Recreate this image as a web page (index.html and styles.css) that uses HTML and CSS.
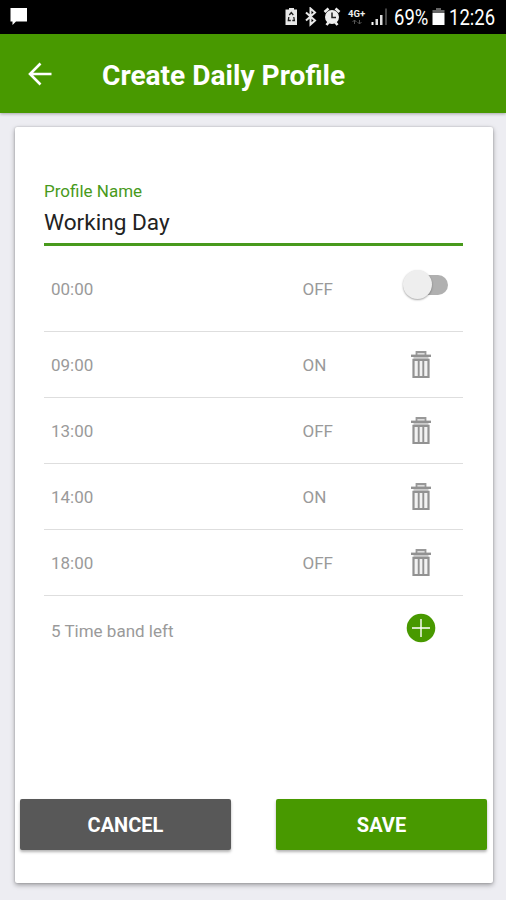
FILE: index.html
```html
<!DOCTYPE html>
<html lang="en">
<head>
<meta charset="utf-8">
<title>Create Daily Profile</title>
<link rel="stylesheet" href="styles.css">
</head>
<body>
<svg class="defs" width="0" height="0" aria-hidden="true">
  <symbol id="trash" viewBox="0 0 22 30">
    <path d="M6.500 5V2h9v3" fill="#ddd" stroke="#999" stroke-width="1.800"/>
    <path d="M1 5.800h20" stroke="#929292" stroke-width="2.400"/>
    <path d="M3.500 7h15v2h-15z" fill="#ccc"/>
    <path d="M3.500 9.800h15v17.200h-15z" fill="#f2f2f2" stroke="#929292" stroke-width="2.200"/>
    <path d="M8.700 10v17M13.300 10v17" stroke="#929292" stroke-width="1.900"/>
  </symbol>
</svg>
<header class="status">
  <svg class="chat" width="18" height="20" viewBox="0 0 18 20"><path d="M.5 1h16.500v13.500H6L2.500 18v-3.500h-2z" fill="#fff"/></svg>
  <div class="indicators">
    <svg width="106" height="20" viewBox="0 0 106 20">
      <path d="M5 1h5v1.500h3V18H1.500V2.500H5z" fill="#e8e8e8"/>
      <path d="M5.300 8 7.300 5.500l2 2.500M4.800 10l-.5 3.500h2.500M9.800 10l.6 3.500H8.300" fill="none" stroke="#222" stroke-width="1.300"/>
      <path d="m22 5.500 9 8-4.500 4V1.500l4.500 4-9 8" fill="none" stroke="#e8e8e8" stroke-width="2"/>
      <circle cx="48" cy="10" r="7" fill="#eee"/>
      <path d="m40.500 5 4-3.500M55.500 5l-4-3.500M42.500 18l2-2.500M53.500 18l-2-2.500" stroke="#eee" stroke-width="2.600"/>
      <path d="M48 5.500V10.500h4" fill="none" stroke="#222" stroke-width="1.500"/>
      <text class="network" x="64" y="9.500">4G+</text>
      <path d="M70.500 17v-4m-2 2 2-2 2 2M75.500 13v4m-2-2 2 2 2-2" fill="none" stroke="#555" stroke-width="1"/>
      <path d="M87.500 15h2v3h-2z" fill="#fff"/><path d="M91.500 12H94v6h-2.500zM96 8h2.500v10H96z" fill="#ddd"/><path d="M101 1.500h2V18h-2z" fill="#444"/>
    </svg>
    <span class="percent">69%</span>
    <svg class="battery" width="13" height="19" viewBox="0 0 13 19"><path d="M4 1h5v2h3.500v3H.5V3H4z" fill="#666"/><path d="M.5 6h12v12H.5z" fill="#fff"/></svg>
    <span class="clock">12:26</span>
  </div>
</header>
<nav class="appbar">
  <svg class="back" width="24" height="24" viewBox="0 0 24 24"><path d="M23.500 12H2M12.500 1.500 2 12l10.500 10.500" fill="none" stroke="#fff" stroke-width="2.600"/></svg>
  <h1>Create Daily Profile</h1>
</nav>
<main class="card">
  <section class="content">
    <div class="label">Profile Name</div>
    <div class="field">Working Day</div>
    <div class="row first"><span class="time">00:00</span><span class="state">OFF</span><span class="action"><span class="switch"><span class="thumb"></span></span></span></div>
    <div class="row"><span class="time">09:00</span><span class="state">ON</span><span class="action"><svg width="22" height="30"><use href="#trash"/></svg></span></div>
    <div class="row"><span class="time">13:00</span><span class="state">OFF</span><span class="action"><svg width="22" height="30"><use href="#trash"/></svg></span></div>
    <div class="row"><span class="time">14:00</span><span class="state">ON</span><span class="action"><svg width="22" height="30"><use href="#trash"/></svg></span></div>
    <div class="row"><span class="time">18:00</span><span class="state">OFF</span><span class="action"><svg width="22" height="30"><use href="#trash"/></svg></span></div>
    <div class="row last"><span class="left">5 Time band left</span><span class="action"><svg class="add" width="30" height="30" viewBox="0 0 30 30"><circle cx="15" cy="15" r="14.300" fill="#489900"/><path d="M6 15h18M15 6v18" stroke="#fff" stroke-width="1.400"/></svg></span></div>
  </section>
  <footer class="buttons">
    <button class="cancel">CANCEL</button>
    <button class="save">SAVE</button>
  </footer>
</main>
</body>
</html>
```

FILE: styles.css
```css
* { box-sizing: border-box; }
body {
  margin: 0;
  height: 900px;
  display: flex;
  flex-direction: column;
  overflow: hidden;
  background: #ededf2;
  font-family: Roboto, "Liberation Sans", sans-serif;
}
.defs { display: none; }
.status {
  height: 34px;
  flex: none;
  display: flex;
  justify-content: space-between;
  padding: 0 10px;
  background: #000;
  color: #fff;
}
.chat { margin-top: 7px; }
.indicators { display: flex; width: 212px; padding-top: 7px; }
.indicators svg { flex: none; }
.network { font-size: 9.500px; font-weight: 700; fill: #eee; }
.percent, .clock {
  font-size: 22px;
  line-height: 22px;
  transform-origin: left center;
  transform: scaleX(.84);
  white-space: nowrap;
}
.percent { width: 38px; margin-left: 4px; }
.clock { width: 46px; margin-left: 4px; }
.appbar {
  height: 79px;
  flex: none;
  display: flex;
  align-items: center;
  padding: 2px 0 0 28px;
  background: #489900;
  box-shadow: 0 1px 3px rgba(0, 0, 0, .3);
}
.back { margin-top: -1px; }
.appbar h1 {
  margin: 3px 0 0 50px;
  font-size: 28.100px;
  line-height: 32px;
  font-weight: 700;
  color: #fff;
  white-space: nowrap;
}
.card {
  height: 756px;
  flex: none;
  display: flex;
  flex-direction: column;
  justify-content: space-between;
  margin: 14px 13px 0 15px;
  background: #fff;
  border-radius: 2px;
  box-shadow: 0 2px 5px rgba(0, 0, 0, .35), 0 0 2px rgba(0, 0, 0, .2);
}
.content { padding: 53px 30px 0 29px; }
.label { font-size: 17px; line-height: 22px; color: #489a1c; }
.field {
  height: 44px;
  padding-top: 7px;
  border-bottom: 3px solid #489a1c;
  font-size: 22.600px;
  line-height: 28px;
  color: #222;
}
.row {
  height: 66px;
  display: flex;
  align-items: center;
  padding: 1px 0 0 7px;
  border-bottom: 1px solid #dedede;
  font-size: 17px;
  line-height: 20px;
  color: #9a9a9a;
}
.row > span { flex: none; }
.first { height: 86px; padding-top: 0; }
.last { border: 0; height: 68px; padding-top: 0; }
.time { width: 251.500px; }
.state { width: 76.500px; }
.left { width: 328px; padding-top: 2px; }
.action { width: 84px; display: flex; justify-content: center; }
.first .action { margin-top: -8px; }
.last .action { margin-top: -5px; }
.switch {
  width: 44px;
  height: 20px;
  display: flex;
  align-items: center;
  margin-left: 9px;
  background: #b0b0b0;
  border-radius: 10px;
}
.thumb {
  width: 29px;
  height: 29px;
  flex: none;
  margin-left: -1px;
  border-radius: 50%;
  background: #eee;
  box-shadow: 0 1px 2px rgba(0, 0, 0, .35);
}
.buttons { display: flex; justify-content: space-between; padding: 0 6px 33px 5px; }
.buttons button {
  width: 211px;
  height: 51px;
  padding: 1px 0 0;
  border: 0;
  border-radius: 2px;
  font: 700 20px/24px Roboto, "Liberation Sans", sans-serif;
  color: #fff;
  box-shadow: 0 2px 3px rgba(0, 0, 0, .3);
}
.buttons .cancel { background: #585858; }
.buttons .save { background: #489900; }
```
